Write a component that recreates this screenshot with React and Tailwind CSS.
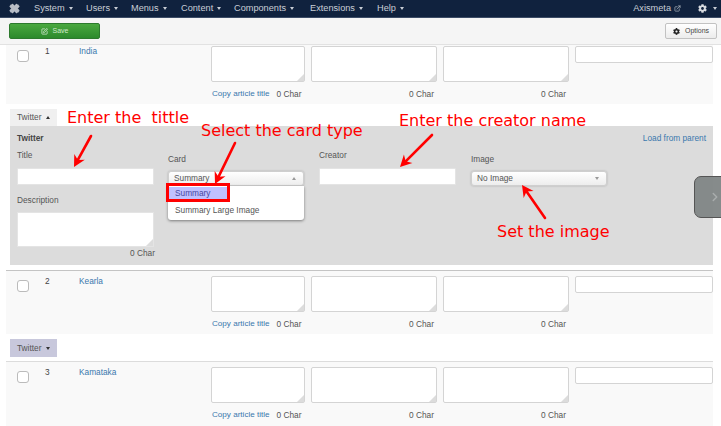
import React from "react";
import { SquarePen, ExternalLink, ChevronRight } from "lucide-react";
import { FaCog } from "react-icons/fa";

const Caret = ({ up, className = "" }) => (
  <span className={`inline-block w-0 h-0 border-x-[2.5px] border-x-transparent ${up ? "border-b-[3px] border-b-current" : "border-t-[3px] border-t-current"} ${className}`} />
);

const Grip = () => <span className="absolute right-0 bottom-0 w-0 h-0 border-l-[7px] border-l-transparent border-b-[7px] border-b-[#dcdcdc]" />;

const TextBox = ({ w }) => (
  <div className={`relative h-[36px] ${w} bg-white border border-[#d4d4d4] rounded-[2px]`}><Grip /></div>
);

const Row = ({ n, name, cls }) => (
  <div className={`flex bg-[#f9f9f9] mx-[6px] w-[707px] text-[8.3px] leading-[12px] font-['Liberation_Sans',sans-serif] ${cls}`}>
    <div className="w-[39px] pl-[11px]">
      <div className="w-[12px] h-[12px] bg-white border border-[#bbbbbb] rounded-[3px] mt-[4px]" />
    </div>
    <div className="w-[34px] text-[#444] leading-[11px]">{n}</div>
    <div className="w-[132px] text-[#3a78ad] leading-[11px]">{name}</div>
    <div className="w-[100px]">
      <TextBox w="w-[94px]" />
      <div className="flex mt-[6px] whitespace-nowrap pl-px">
        <span className="text-[#3a78ad] text-[8.1px]">Copy article title</span>
        <span className="text-[#555] ml-[7px]">0 Char</span>
      </div>
    </div>
    <div className="w-[132px]">
      <TextBox w="w-[126px]" />
      <div className="text-[#555] text-right mt-[6px] pr-[3px] w-[126px]">0 Char</div>
    </div>
    <div className="w-[132px]">
      <TextBox w="w-[126px]" />
      <div className="text-[#555] text-right mt-[6px] pr-[3px] w-[126px]">0 Char</div>
    </div>
    <div className="w-[138px] h-[17px] bg-white border border-[#d4d4d4] rounded-[2px]" />
  </div>
);

const Field = ({ children }) => <span className="block text-[8.3px] leading-[12px] text-[#555]">{children}</span>;
const Input = () => <div className="h-[17px] w-[137px] bg-white border border-[#e4e4e4] rounded-[1px]" />;

const Select = ({ label, w = "w-[136px]", up }) => (
  <div className={`flex items-center justify-between h-[15px] ${w} px-[5px] pr-[7px] text-[8.3px] text-[#555] rounded-[3px] border border-[#cfcfcf] bg-gradient-to-b from-white to-[#ededed] shadow-[0_0_2px_rgba(0,0,0,0.25)]`}>
    <span>{label}</span>
    <Caret up={up} className="text-[#999]" />
  </div>
);

const NavItem = ({ children, cls }) => (
  <div className={`flex items-center gap-[4px] ${cls}`}>
    <span>{children}</span>
    <Caret />
  </div>
);

const Arrow = ({ x1, y1, x2, y2 }) => {
  const a = Math.atan2(y2 - y1, x2 - x1);
  const L = 13, W = 0.48;
  const px = (s) => `${x2 - L * Math.cos(a + s * W)},${y2 - L * Math.sin(a + s * W)}`;
  const nx = x2 - 8 * Math.cos(a), ny = y2 - 8 * Math.sin(a);
  return (
    <g>
      <line x1={x1} y1={y1} x2={nx} y2={ny} stroke="#ff0000" strokeWidth="2.6" strokeLinecap="round" />
      <polygon points={`${x2},${y2} ${px(1)} ${nx},${ny} ${px(-1)}`} fill="#ff0000" />
    </g>
  );
};

const Note = ({ cls, children }) => (
  <span className={`absolute z-20 text-[#ff0000] text-[16px] leading-[20px] whitespace-pre font-['DejaVu_Sans',sans-serif] ${cls}`}>{children}</span>
);

export default function App() {
  return (
    <div className="relative w-[721px] h-[426px] overflow-hidden bg-white font-['Liberation_Sans',sans-serif]">
      <header className="flex items-center h-[18px] bg-[#10223e] border-b border-[#3c4c66] text-[#c9ced6] text-[9.2px]">
        <svg className="ml-[9px] w-[11px] h-[11px]" viewBox="0 0 16 16" fill="none" stroke="#b8bdc6" strokeWidth="2.6" strokeLinecap="round">
          <path d="M3 3.5 7 7.5M13 3.5 9 7.5M3 12.5 7 8.5M13 12.5 9 8.5M5 2.5 8 5.5 11 2.5M5 13.5 8 10.5 11 13.5M2 5 5 8 2 11M14 5 11 8 14 11" />
        </svg>
        <NavItem cls="ml-[14px] w-[52px]">System</NavItem>
        <NavItem cls="w-[45px]">Users</NavItem>
        <NavItem cls="w-[50px]">Menus</NavItem>
        <NavItem cls="w-[53px]">Content</NavItem>
        <NavItem cls="w-[76px]">Components</NavItem>
        <NavItem cls="w-[67px]">Extensions</NavItem>
        <NavItem cls="">Help</NavItem>
        <div className="ml-auto flex items-center">
          <span>Axismeta</span>
          <ExternalLink className="ml-[3px] w-[7px] h-[7px]" />
          <FaCog className="ml-[17px] w-[9px] h-[9px] text-[#d8dbe0]" />
          <Caret className="ml-[6px] mr-[4px]" />
        </div>
      </header>

      <div className="flex items-center justify-between h-[27px] bg-[#f5f5f5] border-b border-[#e2e2e2] pl-[9px] pr-[4px]">
        <button className="flex items-center justify-center gap-[5px] w-[91px] h-[16px] rounded-[2px] bg-gradient-to-b from-[#4aa83f] to-[#2c8a2c] border border-[#2d7a2d] text-[#cfe8c9] text-[7px]">
          <SquarePen className="w-[7px] h-[7px] text-white" />
          <span>Save</span>
        </button>
        <button className="flex items-center justify-center gap-[5px] w-[52px] h-[16px] rounded-[2px] bg-gradient-to-b from-white to-[#ececec] border border-[#c2c2c2] text-[#444] text-[7px]">
          <FaCog className="w-[7px] h-[7px] text-[#222]" />
          <span>Options</span>
        </button>
      </div>

      <Row n="1" name="India" cls="h-[59px] pt-px" />

      <div className="mx-[10px] w-[703px] mt-[5px]">
        <div className="flex items-center gap-[5px] w-[47px] h-[17px] pl-[7px] bg-[#f0f0f0] text-[8.3px] text-[#555]">
          <span>Twitter</span>
          <Caret up className="text-[#333]" />
        </div>
        <div className="h-[139px] bg-[#dcdcdc] px-[7px] pt-[6px]">
          <div className="flex justify-between text-[8.3px] leading-[12px]">
            <b className="text-[#444]">Twitter</b>
            <span className="text-[#3a78ad]">Load from parent</span>
          </div>
          <div className="flex gap-[14px] mt-[5px]">
            <div className="w-[137px]">
              <Field>Title</Field>
              <div className="mt-[7px]"><Input /></div>
              <div className="mt-[9px]"><Field>Description</Field></div>
              <div className="relative mt-[6px] h-[35px] w-[137px] bg-white border border-[#e4e4e4]"><Grip /></div>
              <div className="text-[8.3px] leading-[12px] text-[#555] text-right w-[138px]">0 Char</div>
            </div>
            <div className="w-[137px] pt-[4px] relative">
              <Field>Card</Field>
              <div className="mt-[6px]"><Select label="Summary" up /></div>
              <div className="absolute left-0 top-[37px] w-[136px] h-[34px] bg-white rounded-b-[3px] shadow-[0_1px_3px_rgba(0,0,0,0.45)] text-[8.3px] leading-[12px] text-[#555] pt-px px-px z-10">
                <div className="w-[58px] h-[13px] pl-[6px] bg-[#c0c0ff] text-[#4747a0]">Summary</div>
                <div className="pl-[6px] mt-[4px]">Summary Large Image</div>
              </div>
            </div>
            <div className="w-[137px]">
              <Field>Creator</Field>
              <div className="mt-[7px]"><Input /></div>
            </div>
            <div className="w-[137px] pt-[4px] pl-px">
              <Field>Image</Field>
              <div className="mt-[6px]"><Select label="No Image" /></div>
            </div>
          </div>
        </div>
      </div>

      <div className="mt-[5px] mx-[6px] w-[707px] h-px bg-[#c4c4c4]" />
      <Row n="2" name="Kearla" cls="h-[63px] pt-[5px]" />

      <div className="flex items-center gap-[5px] ml-[10px] mt-[5px] w-[47px] h-[18px] pl-[7px] bg-[#c8c8dc] text-[8.3px] text-[#555]">
        <span>Twitter</span>
        <Caret className="text-[#333]" />
      </div>

      <div className="mt-[4px] mx-[6px] w-[707px] h-px bg-[#dcdcdc]" />
      <Row n="3" name="Kamataka" cls="h-[64px] pt-[5px]" />

      <div className="absolute z-20 left-[694px] top-[176px] w-[30px] h-[42px] flex items-center justify-end pr-[1px] rounded-l-[7px] border border-[#555] bg-[#7f8585]/95">
        <ChevronRight className="w-[14px] h-[14px] text-[#a9adad]" strokeWidth={2.5} />
      </div>

      <div className="absolute z-20 left-[166px] top-[183px] w-[64px] h-[19px] border-[3px] border-[#ff0000]" />

      <Note cls="left-[67px] top-[108px]">{"Enter the  tittle"}</Note>
      <Note cls="left-[201px] top-[121px]">Select the card type</Note>
      <Note cls="left-[399px] top-[111px]">Enter the creator name</Note>
      <Note cls="left-[497px] top-[222px]">Set the image</Note>

      <svg className="absolute inset-0 z-20 pointer-events-none" width="721" height="426">
        <Arrow x1={91} y1={136} x2={74} y2={167} />
        <Arrow x1={235} y1={143} x2={215} y2={184} />
        <Arrow x1={432} y1={135} x2={400} y2={167} />
        <Arrow x1={545} y1={218} x2={522} y2={185} />
      </svg>
    </div>
  );
}
